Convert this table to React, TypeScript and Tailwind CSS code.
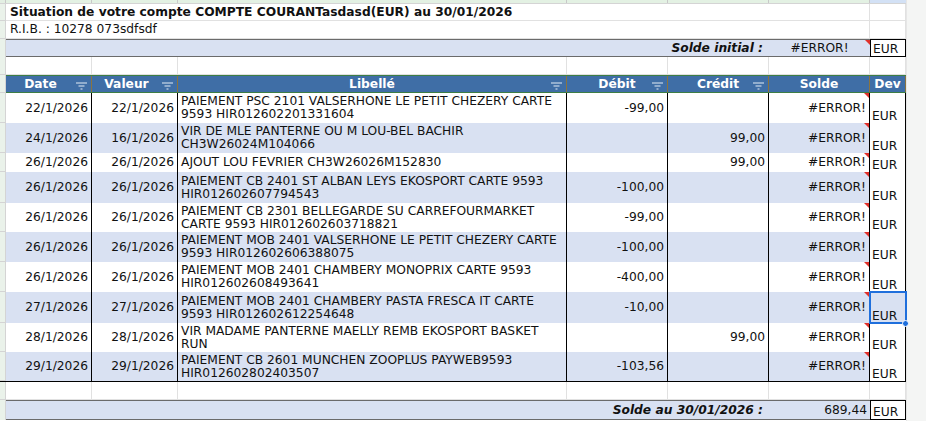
import React from 'react';

type Row = {
  date: string;
  valeur: string;
  libelle: string[];
  debit: string;
  credit: string;
  h: string;
};

const rows: Row[] = [
  { date: '22/1/2026', valeur: '22/1/2026', libelle: ['PAIEMENT PSC 2101 VALSERHONE LE PETIT CHEZERY CARTE', '9593 HIR012602201331604'], debit: '-99,00', credit: '', h: 'h-[30px]' },
  { date: '24/1/2026', valeur: '16/1/2026', libelle: ['VIR DE MLE PANTERNE OU M LOU-BEL BACHIR', 'CH3W26024M104066'], debit: '', credit: '99,00', h: 'h-[30px]' },
  { date: '26/1/2026', valeur: '26/1/2026', libelle: ['AJOUT LOU FEVRIER CH3W26026M152830'], debit: '', credit: '99,00', h: 'h-[19px]' },
  { date: '26/1/2026', valeur: '26/1/2026', libelle: ['PAIEMENT CB 2401 ST ALBAN LEYS EKOSPORT CARTE 9593', 'HIR012602607794543'], debit: '-100,00', credit: '', h: 'h-[31px]' },
  { date: '26/1/2026', valeur: '26/1/2026', libelle: ['PAIEMENT CB 2301 BELLEGARDE SU CARREFOURMARKET', 'CARTE 9593 HIR012602603718821'], debit: '-99,00', credit: '', h: 'h-[29px]' },
  { date: '26/1/2026', valeur: '26/1/2026', libelle: ['PAIEMENT MOB 2401 VALSERHONE LE PETIT CHEZERY CARTE', '9593 HIR012602606388075'], debit: '-100,00', credit: '', h: 'h-[30px]' },
  { date: '26/1/2026', valeur: '26/1/2026', libelle: ['PAIEMENT MOB 2401 CHAMBERY MONOPRIX CARTE 9593', 'HIR012602608493641'], debit: '-400,00', credit: '', h: 'h-[30px]' },
  { date: '27/1/2026', valeur: '27/1/2026', libelle: ['PAIEMENT MOB 2401 CHAMBERY PASTA FRESCA IT CARTE', '9593 HIR012602612254648'], debit: '-10,00', credit: '', h: 'h-[31px]' },
  { date: '28/1/2026', valeur: '28/1/2026', libelle: ['VIR MADAME PANTERNE MAELLY REMB EKOSPORT BASKET', 'RUN'], debit: '', credit: '99,00', h: 'h-[29px]' },
  { date: '29/1/2026', valeur: '29/1/2026', libelle: ['PAIEMENT CB 2601 MUNCHEN ZOOPLUS PAYWEB9593', 'HIR012602802403507'], debit: '-103,56', credit: '', h: 'h-[30px]' },
];

const cols = 'grid grid-cols-[6px_86px_86px_389px_101px_101px_101px_36px]';

const FilterIcon = () => (
  <svg width="11" height="8" viewBox="0 0 11 8" className="shrink-0">
    <path d="M0 1h11M2.5 4h6M4.5 7h2" stroke="#e4ebf4" strokeWidth="1.2" />
  </svg>
);

const RedMark = () => (
  <span className="absolute right-0 top-0 w-0 h-0 border-l-[5px] border-l-transparent border-t-[5px] border-t-[#e0302a]" />
);

// empty spreadsheet row with light gridlines
const GridRow = ({ h }: { h: string }) => (
  <div className={`${cols} ${h}`}>
    <div className="bg-[#eaf2ea] border-b border-r border-[#d4d4d4]" />
    {[0, 1, 2, 3, 4, 5, 6].map((i) => (
      <div key={i} className="border-b border-r border-[#e1e1e1]" />
    ))}
  </div>
);

const HeadCell = ({ label, filter, shift }: { label: string; filter?: boolean; shift?: boolean }) => (
  <div
    className={`relative flex items-center justify-center border-r border-[#8a7440] text-white font-bold text-[12.25px] ${
      shift ? 'pr-[16px]' : ''
    }`}
  >
    <span>{label}</span>
    {filter && (
      <span className="absolute right-[4px] top-[6px]">
        <FilterIcon />
      </span>
    )}
  </div>
);

export default function App() {
  return (
    <div className="flex w-[926px] h-[421px] overflow-hidden bg-white text-[12.25px] leading-[13px] text-[#111] font-['DejaVu_Sans',sans-serif]">
      <div className="w-[906px] flex flex-col">
        {/* column header strip */}
        <div className={`${cols} h-[3px]`}>
          <div className="bg-[#e3efe3] border-r border-[#c8c8c8]" />
          {[0, 1, 2, 3, 4, 5].map((i) => (
            <div key={i} className="bg-[#e3f1e3] border-r border-[#c8c8c8]" />
          ))}
          <div className="bg-[#d3e1f5]" />
        </div>

        {/* title */}
        <div className={`${cols} h-[18px] border-t border-[#d4d4d4]`}>
          <div className="bg-[#eaf2ea] border-b border-r border-[#d4d4d4]" />
          <div className="col-span-6 flex items-center pl-[4px] font-bold whitespace-nowrap border-b border-r border-[#e1e1e1]">
            Situation de votre compte COMPTE COURANTasdasd(EUR) au 30/01/2026
          </div>
          <div className="border-b border-r border-[#e1e1e1]" />
        </div>

        {/* RIB */}
        <div className={`${cols} h-[18px]`}>
          <div className="bg-[#eaf2ea] border-b border-r border-[#d4d4d4]" />
          <div className="col-span-6 flex items-center pl-[4px] whitespace-nowrap border-b border-r border-[#e1e1e1]">
            R.I.B. : 10278 073sdfsdf
          </div>
          <div className="border-b border-r border-[#e1e1e1]" />
        </div>

        {/* solde initial */}
        <div className={`${cols} h-[18px]`}>
          <div className="bg-[#eaf2ea] border-r border-[#d4d4d4]" />
          <div className="col-span-5 flex items-center justify-end pr-[6px] bg-[#d9e1f2] border-y border-[#6b6b6b] font-bold italic">
            Solde initial :
          </div>
          <div className="relative flex items-center justify-center bg-[#d9e1f2] border-y border-[#6b6b6b]">
            #ERROR!
            <RedMark />
          </div>
          <div className="flex items-end pl-[2px] border border-black">EUR</div>
        </div>

        <GridRow h="h-[18px]" />

        {/* header */}
        <div className={`${cols} h-[18px]`}>
          <div className="bg-[#eaf2ea] border-b border-r border-[#d4d4d4]" />
          <div className="col-span-7 grid grid-cols-[86px_86px_389px_101px_101px_101px_36px] bg-[#3f6ea6] border-y border-[#3d7d45]">
            <HeadCell label="Date" filter shift />
            <HeadCell label="Valeur" filter shift />
            <HeadCell label="Libellé" filter />
            <HeadCell label="Débit" filter />
            <HeadCell label="Crédit" filter />
            <HeadCell label="Solde" />
            <HeadCell label="Dev" />
          </div>
        </div>

        {/* data rows */}
        {rows.map((r, i) => {
          const stripe = i % 2 === 1 ? 'bg-[#d9e1f2]' : 'bg-white';
          const selected = i === 7;
          return (
            <div key={i} className={`${cols} ${r.h} ${i === rows.length - 1 ? 'border-b border-black' : ''}`}>
              <div className="bg-[#eaf2ea] border-b border-r border-[#d4d4d4]" />
              <div className={`${stripe} flex items-center justify-end pr-[3px] border-r border-black`}>{r.date}</div>
              <div className={`${stripe} flex items-center justify-end pr-[3px] border-r border-black`}>{r.valeur}</div>
              <div className={`${stripe} flex flex-col justify-center pl-[3px] border-r border-black whitespace-nowrap overflow-hidden`}>
                {r.libelle.map((l) => (
                  <span key={l}>{l}</span>
                ))}
              </div>
              <div className={`${stripe} flex items-center justify-end pr-[3px] border-r border-black`}>{r.debit}</div>
              <div className={`${stripe} flex items-center justify-end pr-[3px] border-r border-black`}>{r.credit}</div>
              <div className={`${stripe} relative flex items-center justify-end pr-[3px] border-r border-black`}>
                #ERROR!
                <RedMark />
              </div>
              <div
                className={`relative flex items-end pl-[2px] border-r border-black ${
                  selected ? 'bg-[#d9e1f2] outline-2 outline-[#1f6fdc] -outline-offset-1 z-10' : 'bg-white'
                }`}
              >
                EUR
                {selected && (
                  <span className="absolute -right-[4px] -bottom-[4px] w-[7px] h-[7px] rounded-full bg-[#1f6fdc] border border-white" />
                )}
              </div>
            </div>
          );
        })}

        <GridRow h="h-[18px]" />

        {/* solde final */}
        <div className={`${cols} h-[20px]`}>
          <div className="bg-[#eaf2ea] border-r border-[#d4d4d4]" />
          <div className="col-span-5 flex items-center justify-end pr-[6px] bg-[#d9e1f2] border-y border-[#6b6b6b] font-bold italic">
            Solde au 30/01/2026 :
          </div>
          <div className="flex items-center justify-end pr-[3px] bg-[#d9e1f2] border-y border-[#6b6b6b]">689,44</div>
          <div className="flex items-end pl-[2px] border border-black">EUR</div>
        </div>
      </div>
      <div className="flex-1 bg-[#f4f5f4] border-l border-[#e6e6e6]" />
    </div>
  );
}
